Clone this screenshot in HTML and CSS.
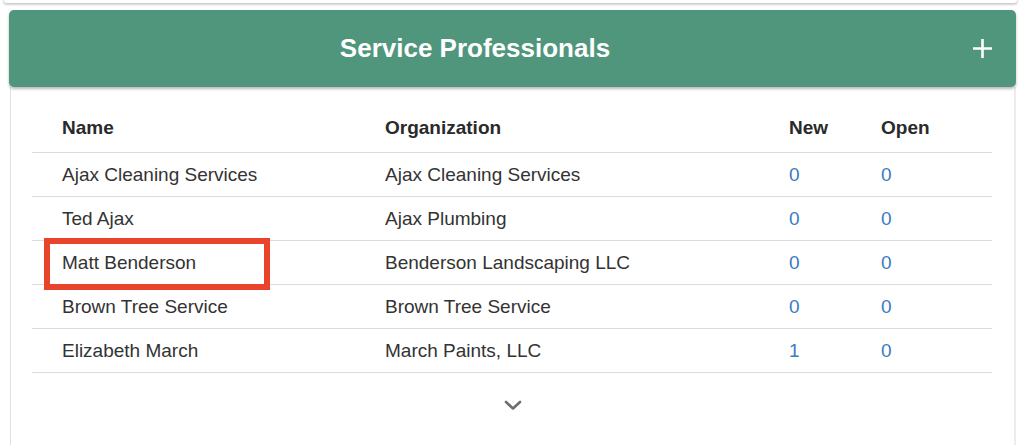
FILE: index.html
```html
<!DOCTYPE html>
<html lang="en">
<head>
<meta charset="utf-8">
<title>Service Professionals</title>
<link rel="stylesheet" href="styles.css">
</head>
<body>
<div class="prev-card"></div>
<section class="panel">
  <header class="panel-head">
    <h1 class="panel-title">Service Professionals</h1>
    <button class="add-btn" aria-label="Add">
      <svg width="19" height="19" viewBox="0 0 19 19"><path d="M9.5 0V19M0 9.5H19" stroke="#fff" stroke-width="2.6" fill="none"/></svg>
    </button>
  </header>
  <div class="panel-body">
    <table class="pro-table">
      <thead>
        <tr><th class="c-name">Name</th><th class="c-org">Organization</th><th class="c-new">New</th><th class="c-open">Open</th></tr>
      </thead>
      <tbody>
        <tr><td>Ajax Cleaning Services</td><td>Ajax Cleaning Services</td><td class="num">0</td><td class="num">0</td></tr>
        <tr><td>Ted Ajax</td><td>Ajax Plumbing</td><td class="num">0</td><td class="num">0</td></tr>
        <tr><td><span class="highlight">Matt Benderson</span></td><td>Benderson Landscaping LLC</td><td class="num">0</td><td class="num">0</td></tr>
        <tr><td>Brown Tree Service</td><td>Brown Tree Service</td><td class="num">0</td><td class="num">0</td></tr>
        <tr><td>Elizabeth March</td><td>March Paints, LLC</td><td class="num">1</td><td class="num">0</td></tr>
      </tbody>
    </table>
    <div class="more">
      <svg width="18" height="11" viewBox="0 0 18 11"><path d="M2 2L9 8.5L16 2" stroke="#6e6e6e" stroke-width="2.6" fill="none" stroke-linecap="round" stroke-linejoin="round"/></svg>
    </div>
  </div>
</section>
</body>
</html>
```

FILE: styles.css
```css
html, body {
  margin: 0;
  padding: 0;
  background: #fff;
  font-family: "Liberation Sans", Arial, Helvetica, sans-serif;
  color: #333;
  height: 445px;
  overflow: hidden;
}

.prev-card {
  height: 3px;
  margin: 0 6px 0 3px;
  border-bottom: 1px solid #cfcfcf;
  border-left: 1px solid #e0e0e0;
  border-right: 1px solid #e0e0e0;
  border-radius: 0 0 6px 6px;
  box-shadow: 0 1px 2px rgba(0, 0, 0, 0.18);
}

.panel {
  margin: 6px 8px 0 9px;
  height: 435px;
  display: flex;
  flex-direction: column;
}

.panel-head {
  position: relative;
  z-index: 1;
  height: 77px;
  background: #4f967c;
  border-radius: 5px;
  box-shadow: 0 2px 3px rgba(0, 0, 0, 0.28);
  display: flex;
  align-items: center;
}

.panel-title {
  flex: 1;
  margin: 0;
  text-align: center;
  color: #fff;
  font-size: 26px;
  font-weight: bold;
  letter-spacing: 0;
}

.add-btn {
  width: 75px;
  height: 40px;
  padding: 0 0 0 32px;
  border: 0;
  background: transparent;
  display: flex;
  align-items: center;
  justify-content: flex-start;
}

.panel-body {
  flex: 1;
  margin-left: 1px;
  border-left: 1px solid #e2e2e2;
  border-right: 2px solid #ececec;
  padding: 22px 0 0 21px;
}

.pro-table {
  width: 960px;
  border-collapse: collapse;
  font-size: 19px;
}

.pro-table th,
.pro-table td {
  height: 43px;
  padding: 0 0 0 30px;
  text-align: left;
  vertical-align: middle;
  border-bottom: 1px solid #dcdcdc;
  white-space: nowrap;
}

.pro-table th {
  height: 38px;
  padding-bottom: 5px;
  font-weight: bold;
  color: #2a2a2a;
}

.c-name { width: 293px; }
.c-org { width: 374px; }
.c-new { width: 62px; }

.pro-table td.num {
  color: #3b7bbf;
}

.highlight {
  position: relative;
}

.highlight::after {
  content: "";
  position: absolute;
  left: -18px;
  top: -14px;
  width: 226px;
  height: 52px;
  box-sizing: border-box;
  border: 6px solid #e9442b;
}

.more {
  display: flex;
  justify-content: center;
  padding-top: 27px;
  margin-left: -21px;
}
```
